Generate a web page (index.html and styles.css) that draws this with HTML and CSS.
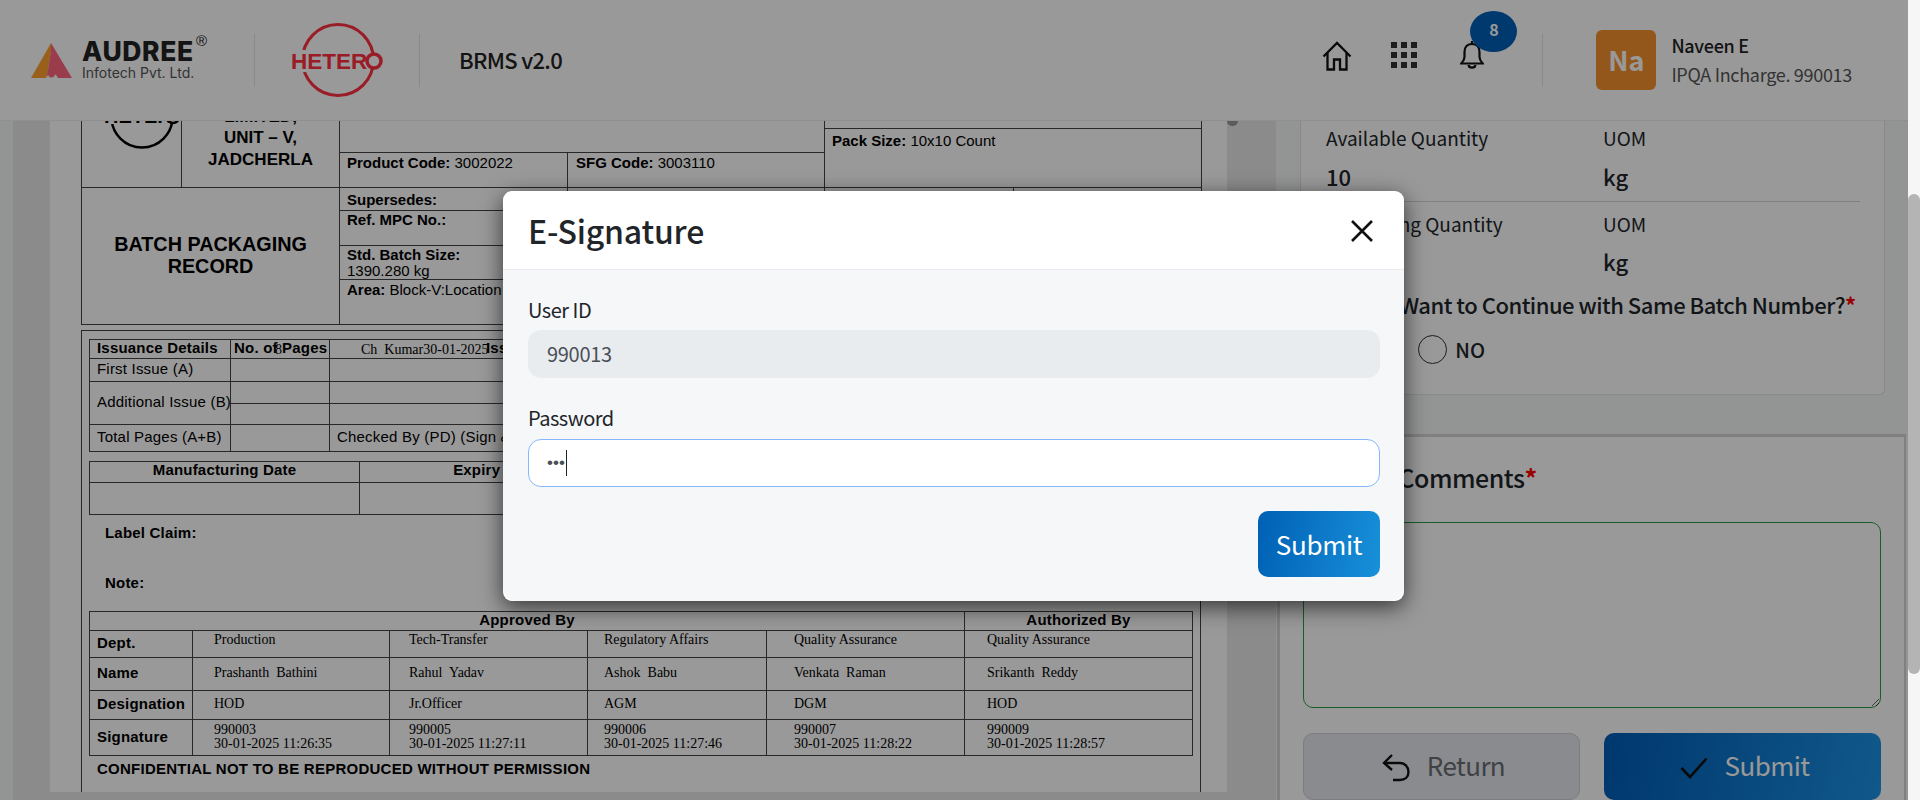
FILE: index.html
```html
<!doctype html>
<html>
<head>
<meta charset="utf-8">
<title>BRMS v2.0</title>
<link rel="stylesheet" href="styles.css">
</head>
<body>
<div class="app">
	<header class="topbar">
		<div class="audree">
			<svg class="audree-mark" width="41" height="35" viewBox="0 0 41 35">
				<polygon points="0,35 20,0 20,8 17,27 15,35" fill="#ffa030"/>
				<path d="M20 0 L41 35 H27 A6.5 7 0 0 0 15 35 L17 27 L20 8 Z" fill="#ff677f"/>
				<circle cx="20.5" cy="31" r="3.4" fill="#ff677f"/>
			</svg>
			<div class="audree-text">
				<div class="audree-name">AUDREE<span class="reg">®</span></div>
				<div class="audree-sub">Infotech Pvt. Ltd.</div>
			</div>
		</div>
		<div class="bar-line first"></div>
		<svg class="hetero" width="94" height="76" viewBox="0 0 94 76">
			<circle cx="48" cy="38" r="35.5" fill="none" stroke="#ff2f40" stroke-width="3"/>
			<rect x="0" y="28" width="76" height="22" fill="#fff"/>
			<text x="1" y="47" class="hetero-text" fill="#ff2f40">HETER</text>
			<circle cx="84" cy="39" r="7" fill="#fff" stroke="#ff2f40" stroke-width="3.5"/>
		</svg>
		<div class="bar-line second"></div>
		<div class="app-name">BRMS v2.0</div>

		<div class="bar-right">
			<svg class="ico-home" width="30" height="30" viewBox="0 0 30 30" fill="none" stroke="#111" stroke-width="2.3" stroke-linejoin="miter">
				<path d="M1.5 15.5 L15 2 L28.5 15.5"/>
				<path d="M5.5 12 V28.5 H12 V18.5 H18 V28.5 H24.5 V12"/>
			</svg>
			<div class="ico-grid">
				<span></span><span></span><span></span>
				<span></span><span></span><span></span>
				<span></span><span></span><span></span>
			</div>
			<div class="bell-wrap">
				<svg width="24" height="30" viewBox="0 0 24 30" fill="none" stroke="#111" stroke-width="2.2">
					<path d="M12 1 V4"/>
					<path d="M4.5 17 V12 C4.5 7 7.5 4 12 4 C16.5 4 19.5 7 19.5 12 V17 C19.5 20 21.5 22 22.8 23.5 H1.2 C2.5 22 4.5 20 4.5 17 Z"/>
					<path d="M8.5 25 C9 28.5 15 28.5 15.5 25"/>
				</svg>
				<span class="badge">8</span>
			</div>
			<div class="bar-line third"></div>
			<div class="avatar">Na</div>
			<div class="who">
				<div class="who-name">Naveen E</div>
				<div class="who-role">IPQA Incharge. 990013</div>
			</div>
		</div>
	</header>

	<div class="content">
		<div class="viewer">
			<div class="pdf-page">
				<table class="sheet top-sheet">
					<colgroup><col class="w100"><col class="w158"><col class="w228"><col class="w257"><col class="w189"><col class="w188"></colgroup>
					<tr class="h69">
						<td rowspan="3" class="logo-cell">
							<svg class="black-logo" width="84" height="64" viewBox="0 0 84 64">
								<circle cx="42" cy="32" r="30.5" fill="none" stroke="#000" stroke-width="2.5"/>
								<rect x="0" y="22" width="70" height="17" fill="#fff"/>
								<text x="4" y="38" class="black-logo-text">HETER</text>
								<circle cx="73" cy="32" r="6" fill="#fff" stroke="#000" stroke-width="2.5"/>
							</svg>
						</td>
						<td rowspan="3" class="plant-cell">HETERO LABS<br>LIMITED,<br>UNIT – V,<br>JADCHERLA</td>
						<td colspan="2" rowspan="2"></td>
						<td colspan="2"></td>
					</tr>
					<tr class="h24">
						<td colspan="2" rowspan="2" class="info-cell pad3"><b>Pack Size:</b> 10x10 Count</td>
					</tr>
					<tr class="h35">
						<td class="info-cell"><b>Product Code:</b> 3002022</td>
						<td class="info-cell"><b>SFG Code:</b> 3003110</td>
					</tr>
					<tr class="h23">
						<td colspan="2" rowspan="4" class="batch-cell">BATCH PACKAGING<br>RECORD</td>
						<td class="info-cell pad3"><b>Supersedes:</b></td><td></td><td></td><td></td>
					</tr>
					<tr class="h35">
						<td class="info-cell pad0"><b>Ref. MPC No.:</b></td><td></td><td></td><td></td>
					</tr>
					<tr class="h33">
						<td class="info-cell tight"><b>Std. Batch Size:</b><br>1390.280 kg</td><td></td><td></td><td></td>
					</tr>
					<tr class="h45">
						<td class="info-cell" colspan="2"><b>Area:</b> Block-V:Location</td><td></td><td></td>
					</tr>
				</table>

				<div class="record-box">
					<table class="sheet issue-sheet">
						<colgroup><col class="w141"><col class="w99"><col></colgroup>
						<tr class="h19">
							<td class="cell-b">Issuance Details</td>
							<td class="cell-b pages-cell">No. of Pages<span class="stamp stamp-8">8</span></td>
							<td class="cell-b issued-cell">Issued By (Sign &amp; Date)<span class="stamp stamp-name">Ch&nbsp; Kumar30-01-2025</span></td>
						</tr>
						<tr class="h23"><td class="cell">First Issue (A)</td><td></td><td></td></tr>
						<tr class="h22"><td class="cell" rowspan="2">Additional Issue (B)</td><td></td><td></td></tr>
						<tr class="h21"><td></td><td></td></tr>
						<tr class="h27"><td class="cell">Total Pages (A+B)</td><td></td><td class="cell">Checked By (PD) (Sign &amp; Date)</td></tr>
					</table>

					<table class="sheet date-sheet">
						<colgroup><col class="w270"><col class="w272"><col></colgroup>
						<tr class="h21"><td class="cell-b center lift">Manufacturing Date</td><td class="cell-b center lift">Expiry Date</td><td></td></tr>
						<tr class="h32"><td></td><td></td><td></td></tr>
					</table>

					<p class="claim first-claim">Label Claim:</p>
					<p class="claim">Note:</p>

					<table class="sheet sign-sheet">
						<colgroup><col class="w103"><col class="w197"><col class="w198"><col class="w179"><col class="w198"><col class="w228"></colgroup>
						<tr class="h19"><td colspan="5" class="cell-b center">Approved By</td><td class="cell-b center">Authorized By</td></tr>
						<tr class="h27">
							<td class="cell-b">Dept.</td>
							<td class="ser up">Production</td><td class="ser up">Tech-Transfer</td><td class="ser up">Regulatory Affairs</td><td class="ser up">Quality Assurance</td><td class="ser up">Quality Assurance</td>
						</tr>
						<tr class="h33">
							<td class="cell-b">Name</td>
							<td class="ser">Prashanth&nbsp; Bathini</td><td class="ser">Rahul&nbsp; Yadav</td><td class="ser">Ashok&nbsp; Babu</td><td class="ser">Venkata&nbsp; Raman</td><td class="ser">Srikanth&nbsp; Reddy</td>
						</tr>
						<tr class="h29">
							<td class="cell-b">Designation</td>
							<td class="ser">HOD</td><td class="ser">Jr.Officer</td><td class="ser">AGM</td><td class="ser">DGM</td><td class="ser">HOD</td>
						</tr>
						<tr class="h36">
							<td class="cell-b">Signature</td>
							<td class="ser">990003<br>30-01-2025 11:26:35</td>
							<td class="ser">990005<br>30-01-2025 11:27:11</td>
							<td class="ser">990006<br>30-01-2025 11:27:46</td>
							<td class="ser">990007<br>30-01-2025 11:28:22</td>
							<td class="ser">990009<br>30-01-2025 11:28:57</td>
						</tr>
					</table>
					<div class="confidential">CONFIDENTIAL NOT TO BE REPRODUCED WITHOUT PERMISSION</div>
				</div>
			</div>
			<span class="viewer-nub"></span>
		</div>

		<div class="side">
			<section class="qty-card">
				<div class="qty-row">
					<div><div class="qty-label">Available Quantity</div><div class="qty-value">10</div></div>
					<div><div class="qty-label">UOM</div><div class="qty-value">kg</div></div>
				</div>
				<div class="qty-row no-line">
					<div><div class="qty-label">Remaining Quantity</div><div class="qty-value">&nbsp;</div></div>
					<div><div class="qty-label">UOM</div><div class="qty-value">kg</div></div>
				</div>
				<div class="question">Do You Want to Continue with Same Batch Number?<span class="req">*</span></div>
				<div class="radios">
					<label class="radio-item"><input type="radio" name="same">YES</label>
					<label class="radio-item"><input type="radio" name="same">NO</label>
				</div>
			</section>

			<section class="comment-card">
				<div class="comment-title">Return Comments<span class="req">*</span></div>
				<textarea class="comment-box"></textarea>
				<div class="comment-actions">
					<button class="btn btn-return">
						<svg width="28" height="28" viewBox="0 0 28 28" fill="none" stroke="#111" stroke-width="2.4">
							<path d="M10 1 L2 9 L10 16"/>
							<path d="M2.5 9 H18 C23 9 26.5 13 26.5 18 C26.5 23 23 26 18 26 H11"/>
						</svg>
						Return
					</button>
					<button class="btn btn-submit">
						<svg width="28" height="22" viewBox="0 0 28 22" fill="none" stroke="#111" stroke-width="2.6">
							<path d="M1.5 11 L10 20 L26.5 1.5"/>
						</svg>
						Submit
					</button>
				</div>
			</section>
		</div>
	</div>

	<div class="backdrop">
		<div class="modal">
			<div class="modal-head">
				<h2>E-Signature</h2>
				<svg class="modal-close" width="22" height="22" viewBox="0 0 22 22" stroke="#111" stroke-width="2.6">
					<path d="M1 1 L21 21 M21 1 L1 21"/>
				</svg>
			</div>
			<div class="modal-body">
				<label class="field-label">User ID</label>
				<input class="field" type="text" value="990013" disabled>
				<label class="field-label pw-label">Password</label>
				<div class="field field-focus"><span class="dots">•••</span><span class="caret"></span></div>
				<div class="modal-foot"><button class="modal-submit">Submit</button></div>
			</div>
		</div>
	</div>
</div>
<div class="scrollbar"><div class="scroll-thumb"></div></div>
</body>
</html>
```

FILE: styles.css
```css
* {margin:0; padding:0; box-sizing:border-box;}
html, body {height:800px; overflow:hidden;}
body {display:flex; font-family:"Noto Sans CJK SC","Noto Sans",sans-serif; color:#212529; background:#f5f8f7;}

.app {width:1908px; height:800px; position:relative; overflow:hidden;}
.scrollbar {width:12px; height:800px; background:#f6f6f6;}
.scroll-thumb {margin-top:194px; height:480px; background:#b4b4b4; border-radius:6px;}

/* top bar */
.topbar {height:121px; background:#fff; border-bottom:1px solid #eee; display:flex; align-items:center; padding-left:31px; position:relative; z-index:2;}
.audree {display:flex; height:40px; width:176px;}
.audree-mark {display:block; align-self:flex-end; margin-bottom:2px;}
.audree-text {margin-left:10px; position:relative;}
.audree-name {font-family:Inter,"Liberation Sans",sans-serif; font-weight:800; font-size:26.5px; letter-spacing:.6px; line-height:22px; margin-bottom:3px; color:#222; white-space:nowrap;}
.reg {position:absolute; left:114px; top:-6px; font-family:"Liberation Sans",sans-serif; font-size:15px; letter-spacing:0; line-height:14px; font-weight:400;}
.audree-sub {font-family:Inter,"Liberation Sans",sans-serif; font-size:14px; line-height:15px; color:#555; white-space:nowrap;}
.bar-line {width:1px; height:53px; background:#e4e4e4;}
.bar-line.first {margin-left:47px; margin-right:35px;}
.bar-line.second {margin-left:35px; margin-right:39px;}
.bar-line.third {margin-left:58px; margin-right:53px;}
.hetero {display:block; margin-top:-1px;}
.hetero-text {font-family:"Liberation Sans",sans-serif; font-weight:700; font-size:22.5px;}
.app-name {font-size:22px; font-weight:500; line-height:30px; letter-spacing:-.7px; margin-top:-2px; color:#222; white-space:nowrap;}
.bar-right {margin-left:auto; padding-right:56px; display:flex; align-items:center;}
.ico-home {display:block; margin-top:-8px;}
.ico-grid {display:grid; grid-template-columns:repeat(3,6px); grid-auto-rows:6px; gap:4px; margin-left:39px; margin-top:-10px;}
.ico-grid span {background:#333;}
.bell-wrap {position:relative; margin-left:43px; margin-top:-10px; height:30px;}
.bell-wrap svg {display:block;}
.badge {position:absolute; left:10px; top:-29px; width:47px; height:41px; border-radius:50%; background:#0060b8; color:#fff; font-size:16px; font-weight:700; line-height:36px; text-align:center;}
.avatar {width:60px; height:60px; border-radius:6px; background:#f59230; color:#fff; font-size:27px; font-weight:700; line-height:60px; text-align:center;}
.who {margin-left:15px; white-space:nowrap;}
.who-name {font-size:18px; font-weight:500; line-height:29px; letter-spacing:-.3px; color:#222;}
.who-role {font-size:18px; line-height:29px; letter-spacing:-.3px; color:#555;}

/* pdf viewer */
.content {display:flex; height:679px;}
.viewer {width:1263px; margin-left:13px; height:679px; background:#e8e8e8; position:relative; overflow:hidden;}
.pdf-page {width:1177px; height:671px; margin-left:37px; padding-left:31px; background:#fff; overflow:hidden; font-family:"Liberation Sans",Arial,sans-serif; color:#000;}
.viewer-nub {position:absolute; left:1214px; top:0; width:11px; height:5px; background:#999; border-radius:0 0 6px 6px;}

.sheet {border-collapse:collapse; table-layout:fixed; width:100%; font-size:15px;}
.sheet td {border:1px solid #444; overflow:visible; white-space:nowrap;}
.top-sheet {width:1120px; margin-top:-62px;}
.w100 {width:100px;} .w158 {width:158px;} .w228 {width:228px;} .w257 {width:257px;} .w189 {width:189px;} .w188 {width:188px;}
.w141 {width:141px;} .w99 {width:99px;} .w270 {width:270px;} .w272 {width:272px;}
.w103 {width:103px;} .w197 {width:197px;} .w198 {width:198px;} .w179 {width:179px;} .w228 {width:228px;}
.h19 {height:19px;} .h21 {height:21px;} .h22 {height:22px;} .h23 {height:23px;} .h24 {height:24px;} .h27 {height:27px;} .h29 {height:29px;}
.h32 {height:32px;} .h33 {height:33px;} .h35 {height:35px;} .h36 {height:36px;} .h45 {height:45px;} .h69 {height:69px;}

.logo-cell {vertical-align:top; padding:25px 0 0 18px;}
.black-logo {display:block;}
.black-logo-text {font-family:"Liberation Sans",sans-serif; font-weight:700; font-size:20px;}
.plant-cell {vertical-align:top; padding-top:24px; text-align:center; font-size:17px; font-weight:700; line-height:21.5px;}
.info-cell {vertical-align:top; padding:1px 0 0 7px; line-height:18px;}
.info-cell + .info-cell {padding-left:8px;}
.info-cell.pad3 {padding-top:3px;}
.info-cell.pad0 {padding-top:0;}
.info-cell.tight {line-height:16px;}
.batch-cell {text-align:center; font-size:19.8px; font-weight:700; line-height:22px; padding-bottom:2px;}

.record-box {width:1120px; height:471px; margin-top:5px; padding:8px 8px 0 7px; border:1px solid #444; border-bottom:none;}
.cell, .cell-b {padding-left:7px; padding-bottom:2px; line-height:16px; letter-spacing:.2px;}
.cell-b {font-weight:700;}
.sheet .center {text-align:center; padding-left:0;}
.sheet .lift {padding-bottom:4px;}
.pages-cell {padding-left:3px; position:relative;}
.issued-cell {padding-left:156px; position:relative;}
.stamp {position:absolute; font-family:"Liberation Serif",serif; font-weight:400; font-size:14px; letter-spacing:0;}
.stamp-8 {left:44px; top:2px;}
.stamp-name {left:31px; top:2px;}
.date-sheet {margin-top:9px;}
.claim {padding-left:16px; margin-top:30px; font-size:15px; line-height:20px; font-weight:700; letter-spacing:.2px;}
.claim.first-claim {margin-top:8px;}
.sign-sheet {margin-top:18px;}
.ser {font-family:"Liberation Serif",serif; font-size:14px; line-height:14px; padding-left:21px; padding-bottom:2px;}
.ser:nth-child(3) {padding-left:19px;}
.ser:nth-child(4) {padding-left:16px;}
.ser:nth-child(5) {padding-left:27px;}
.ser:nth-child(6) {padding-left:22px;}
.up {vertical-align:top; padding-top:2px;}
.confidential {padding-left:8px; font-size:15px; font-weight:700; line-height:25px; letter-spacing:.25px; white-space:nowrap;}

/* right column */
.side {width:632px; flex:none;}
.qty-card {height:274px; margin:0 23px 0 24px; padding:3px 24px 0 25px; background:#fff; border:1px solid #e4e4e4; border-top:none; border-radius:0 0 6px 6px;}
.qty-row {display:grid; grid-template-columns:277px 1fr; padding-bottom:11px; border-bottom:1px solid #d8d8d8;}
.qty-row .qty-value {margin-top:10px;}
.qty-row.no-line {border-bottom:none; padding-bottom:0; padding-top:8px;}
.qty-row.no-line .qty-value {margin-top:9px;}
.qty-label {font-size:19px; line-height:28px;}
.qty-value {font-size:22px; font-weight:500; line-height:28px;}
.question {font-size:22px; font-weight:500; line-height:30px; letter-spacing:-.5px; margin-top:14px; white-space:nowrap;}
.req {color:#ff0000; font-weight:700;}
.radios {display:flex; gap:20px; margin-top:16px;}
.radio-item {display:flex; align-items:center; gap:8px; font-size:20px; font-weight:500; line-height:29px;}
.radio-item input {appearance:none; width:29px; height:29px; border:1.5px solid #333; border-radius:50%; background:#fff;}

.comment-card {height:400px; margin:39px 2px 0 1px; border:solid #d5d5d5; border-width:3px 2px 0 3px; background:#fff; padding:0 23px;}
.comment-title {font-size:25px; font-weight:500; line-height:36px; letter-spacing:-.5px; margin-top:22px; padding-left:12px;}
.comment-box {display:block; width:578px; height:186px; margin-top:27px; border:1px solid #2a9d47; border-radius:10px; background:#fff; outline:none;}
.comment-actions {display:grid; grid-template-columns:277px 277px; gap:24px; margin-top:25px;}
.btn {height:67px; padding:0 0 3px 4px; border-radius:10px; font:400 26px/30px "Noto Sans CJK SC","Noto Sans",sans-serif; letter-spacing:-.6px; display:flex; align-items:center; justify-content:center; gap:17px;}
.btn svg {margin-top:5px;}
.btn-return {background:#e6e8ee; border:1px solid #ced0d4; color:#6a6d73;}
.btn-submit {background:linear-gradient(100deg,#005db7,#1c94e6); border:none; color:#fff;}

/* e-signature dialog */
.backdrop {position:absolute; left:0; top:0; width:1908px; height:800px; background:rgba(0,0,0,.4); z-index:5; display:flex; justify-content:center; align-items:flex-start;}
.modal {width:901px; height:410px; margin-top:191px; margin-right:1px; background:#fff; border-radius:9px; box-shadow:0 6px 22px rgba(0,0,0,.65); overflow:hidden;}
.modal-head {height:79px; display:flex; align-items:center; justify-content:space-between; padding:0 31px 0 25px; border-bottom:1px solid #e9ebee;}
.modal-head h2 {font-size:32px; font-weight:500; line-height:44px; letter-spacing:-.2px; color:#212529;}
.modal-close {display:block; margin-top:2px;}
.modal-body {height:331px; padding:25px 24px 0 25px; background:#f6f7f9; border-radius:0 0 14px 14px;}
.field-label {display:block; font-size:20px; line-height:30px; letter-spacing:-.5px; color:#212529; margin-bottom:5px;}
.field-label.pw-label {margin-top:25px; margin-bottom:6px;}
.field {display:block; width:852px; height:48px; border:none; border-radius:13px; padding:0 19px; font:400 20px/48px "Noto Sans CJK SC","Noto Sans",sans-serif; letter-spacing:-.3px; background:#e9ecef; color:#495057;}
.field-focus {height:48px; display:flex; align-items:center; background:#fff; border:1px solid #86b7fe; padding:0 18px;}
.dots {font-family:"Liberation Sans",sans-serif; font-size:17px; letter-spacing:0; line-height:20px; color:#495057;}
.caret {width:1px; height:26px; background:#222; margin-left:1px;}
.modal-foot {display:flex; justify-content:flex-end; margin-top:24px;}
.modal-submit {width:122px; height:66px; border:none; border-radius:10px; background:linear-gradient(100deg,#0060b4,#1890da); color:#fff; font:400 26px/30px "Noto Sans CJK SC","Noto Sans",sans-serif; letter-spacing:-.3px;}
```
